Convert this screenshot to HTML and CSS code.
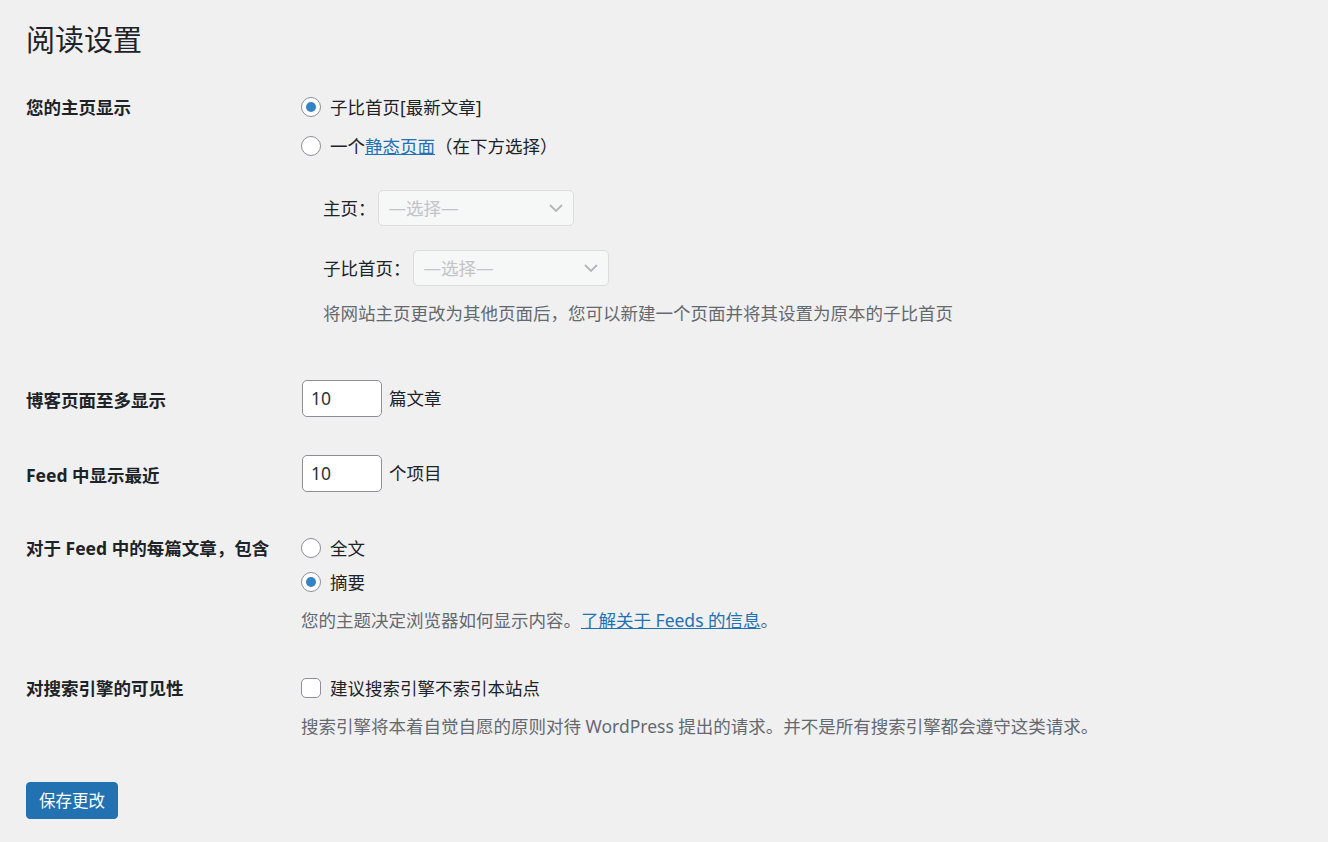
FILE: index.html
```html
<!DOCTYPE html>
<html lang="zh-CN">
<head>
<meta charset="utf-8">
<title>阅读设置</title>
<link rel="stylesheet" href="styles.css">
</head>
<body>
<div class="wrap">
  <h1 class="title">阅读设置</h1>

  <div class="row row-home">
    <div class="th">您的主页显示</div>
    <div class="td">
      <label class="choice"><span class="radio checked"></span><span>子比首页[最新文章]</span></label>
      <label class="choice choice-gap"><span class="radio"></span><span>一个<a href="#" class="link">静态页面</a>（在下方选择）</span></label>
      <div class="sub">
        <div class="sub-row">
          <span class="sub-label">主页：</span>
          <span class="select"><span class="placeholder">—选择—</span><svg class="chev" width="14" height="8" viewBox="0 0 14 8"><path d="M1 1l6 6 6-6" fill="none" stroke="#b4b6b9" stroke-width="1.8"/></svg></span>
        </div>
        <div class="sub-row sub-row-2">
          <span class="sub-label">子比首页：</span>
          <span class="select"><span class="placeholder">—选择—</span><svg class="chev" width="14" height="8" viewBox="0 0 14 8"><path d="M1 1l6 6 6-6" fill="none" stroke="#b4b6b9" stroke-width="1.8"/></svg></span>
        </div>
        <p class="desc sub-desc">将网站主页更改为其他页面后，您可以新建一个页面并将其设置为原本的子比首页</p>
      </div>
    </div>
  </div>

  <div class="row row-num row-posts">
    <div class="th">博客页面至多显示</div>
    <div class="td inline">
      <span class="num">10</span><span class="unit">篇文章</span>
    </div>
  </div>

  <div class="row row-num row-feed">
    <div class="th">Feed 中显示最近</div>
    <div class="td inline">
      <span class="num">10</span><span class="unit">个项目</span>
    </div>
  </div>

  <div class="row row-each">
    <div class="th">对于 Feed 中的每篇文章，包含</div>
    <div class="td">
      <label class="choice"><span class="radio"></span><span>全文</span></label>
      <label class="choice choice-gap2"><span class="radio checked"></span><span>摘要</span></label>
      <p class="desc desc-feed">您的主题决定浏览器如何显示内容。<a href="#" class="link">了解关于 Feeds 的信息</a>。</p>
    </div>
  </div>

  <div class="row row-search">
    <div class="th">对搜索引擎的可见性</div>
    <div class="td">
      <label class="choice"><span class="checkbox"></span><span>建议搜索引擎不索引本站点</span></label>
      <p class="desc desc-search">搜索引擎将本着自觉自愿的原则对待 WordPress 提出的请求。并不是所有搜索引擎都会遵守这类请求。</p>
    </div>
  </div>

  <div class="submit">
    <button class="btn" type="button">保存更改</button>
  </div>
</div>
</body>
</html>
```

FILE: styles.css
```css
html, body {
  margin: 0;
  padding: 0;
  background: #f0f0f1;
}
body {
  color: #1d2327;
  font-family: "Noto Sans", "Noto Sans CJK SC", sans-serif;
  font-size: 17.5px;
  line-height: 23px;
}
.wrap {
  padding: 21px 0 0 26px;
}
.title {
  margin: 0;
  font-size: 29px;
  font-weight: 400;
  line-height: 38px;
  color: #1d2327;
}
.row {
  display: grid;
  grid-template-columns: 275px 1fr;
}
.th {
  font-weight: 700;
  line-height: 23px;
}
.td {
  min-width: 0;
}
.row-home {
  margin-top: 36.5px;
}
.choice {
  display: flex;
  align-items: center;
  gap: 9px;
  line-height: 23px;
  cursor: pointer;
}
.choice-gap {
  margin-top: 16px;
}
.choice-gap2 {
  margin-top: 11px;
}
.radio {
  box-sizing: border-box;
  width: 20px;
  height: 20px;
  border: 1px solid #8c8f94;
  border-radius: 50%;
  background: #fff;
  display: flex;
  align-items: center;
  justify-content: center;
  flex: none;
}
.radio.checked::after {
  content: "";
  width: 10px;
  height: 10px;
  border-radius: 50%;
  background: #3582c4;
}
.checkbox {
  box-sizing: border-box;
  width: 20px;
  height: 20px;
  border: 1px solid #8c8f94;
  border-radius: 5px;
  background: #fff;
  flex: none;
}
.link {
  color: #2271b1;
  text-decoration: underline;
}
.sub {
  padding-left: 22px;
  margin-top: 32.5px;
}
.sub-row {
  display: flex;
  align-items: center;
  gap: 2px;
}
.sub-row-2 {
  margin-top: 24px;
}
.sub-label {
  line-height: 23px;
}
.select {
  box-sizing: border-box;
  width: 196px;
  height: 36px;
  border: 1px solid #dcdcde;
  border-radius: 5px;
  background: #f6f7f7;
  display: flex;
  align-items: center;
  justify-content: space-between;
  padding: 0 10px 0 10px;
}
.placeholder {
  color: #c3c4c7;
}
.chev {
  flex: none;
}
.desc {
  margin: 0;
  color: #646970;
  line-height: 23px;
}
.sub-desc {
  margin-top: 15.5px;
}
.row-posts {
  margin-top: 55.5px;
}
.row-feed {
  margin-top: 38px;
}
.row-num .th {
  align-self: center;
  margin-top: 3px;
}
.inline {
  display: flex;
  align-items: center;
  gap: 7px;
}
.num {
  box-sizing: border-box;
  width: 80px;
  height: 37px;
  margin-left: 1px;
  border: 1px solid #8c8f94;
  border-radius: 5px;
  background: #fff;
  padding: 0 8px;
  display: flex;
  align-items: center;
  color: #2c3338;
}
.row-each {
  margin-top: 44.5px;
}
.desc-feed {
  margin-top: 15px;
}
.row-search {
  margin-top: 45px;
}
.desc-search {
  margin-top: 15px;
}
.submit {
  margin-top: 44.5px;
}
.btn {
  box-sizing: border-box;
  height: 37px;
  padding: 0 12px;
  background: #2271b1;
  border: 1px solid #2271b1;
  border-radius: 4px;
  color: #fff;
  font-family: "Noto Sans", "Noto Sans CJK SC", sans-serif;
  font-size: 16.5px;
  line-height: 35px;
  cursor: pointer;
}
```
